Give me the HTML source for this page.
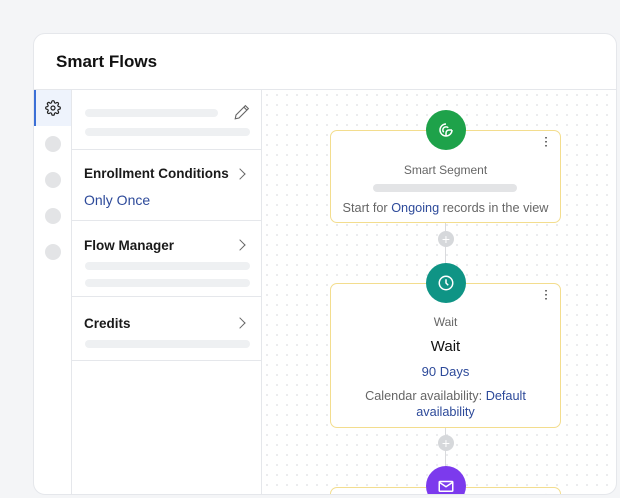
<!DOCTYPE html>
<html><head><style>
*{margin:0;padding:0;box-sizing:border-box}
html,body{width:620px;height:498px;overflow:hidden}
body{background:#f4f5f7;font-family:"Liberation Sans",sans-serif;position:relative}
.card{position:absolute;left:33px;top:33px;width:584px;height:462px;background:#fff;border:1px solid #e5e7eb;border-radius:12px;overflow:hidden}
.hdr{position:absolute;left:0;top:0;right:0;height:56px;border-bottom:1px solid #e5e7eb}
.hdr h1{position:absolute;left:22px;top:18px;font-size:17px;font-weight:bold;color:#111}
.col{position:absolute;left:0;top:56px;width:38px;bottom:0;border-right:1px solid #e5e7eb}
.act{position:absolute;left:0;top:0;width:37px;height:36px;background:#eef3fc;border-left:2px solid #3b6fd6}
.dot{position:absolute;left:11px;width:16px;height:16px;border-radius:50%;background:#e3e4e6}
.panel{position:absolute;left:38px;top:56px;width:190px;bottom:0;border-right:1px solid #e5e7eb}
.sec{position:absolute;left:0;width:189px;border-bottom:1px solid #e5e7eb}
.bar{position:absolute;height:8px;border-radius:4px;background:#eef0f2}
.t{position:absolute;left:12px;font-size:13.5px;font-weight:bold;color:#1a1a1a}
.chev{position:absolute;left:164px;width:8px;height:8px;border-right:1.2px solid #666;border-top:1.2px solid #666;transform:rotate(45deg)}
.canvas{position:absolute;left:228px;top:56px;right:0;bottom:0;background-image:radial-gradient(#e4e5e8 0.8px,transparent 1px);background-size:10px 10px}
.node{position:absolute;left:68px;width:231px;border:1.5px solid #f3dd8e;border-radius:7px;background:#fff;text-align:center;color:#666}
.circ{position:absolute;width:40px;height:40px;border-radius:50%;left:164px;display:flex;align-items:center;justify-content:center}
.line{position:absolute;left:183px;width:1px;background:#d9dadd}
.plus{position:absolute;left:176px;width:16px;height:16px;border-radius:50%;background:#d6d8db;color:#fff;font-size:14px;line-height:16px;text-align:center}
.more{position:absolute;right:12px;top:6px;font-size:10px;color:#333;line-height:4px;font-weight:bold}
.blue{color:#2d4a9a}
</style></head><body>
<div class="card">
 <div class="hdr"><h1>Smart Flows</h1></div>
 <div class="col">
  <div class="act"><svg width="16" height="16" viewBox="0 0 24 24" style="position:absolute;left:9px;top:10px" fill="none" stroke="#222" stroke-width="1.8"><circle cx="12" cy="12" r="3"/><path d="M19.4 15a1.65 1.65 0 0 0 .33 1.82l.06.06a2 2 0 1 1-2.830 2.83l-.06-.06a1.65 1.65 0 0 0-1.820-.33 1.65 1.65 0 0 0-1 1.51V21a2 2 0 1 1-4 0v-.09A1.65 1.65 0 0 0 9 19.4a1.65 1.65 0 0 0-1.82.33l-.06.06a2 2 0 1 1-2.83-2.83l.06-.06A1.65 1.65 0 0 0 4.68 15a1.65 1.65 0 0 0-1.51-1H3a2 2 0 1 1 0-4h.09A1.65 1.65 0 0 0 4.6 9a1.65 1.65 0 0 0-.33-1.82l-.06-.06a2 2 0 1 1 2.83-2.83l.06.06A1.65 1.65 0 0 0 9 4.68a1.65 1.65 0 0 0 1-1.51V3a2 2 0 1 1 4 0v.09a1.65 1.65 0 0 0 1 1.51 1.65 1.65 0 0 0 1.82-.33l.06-.06a2 2 0 1 1 2.83 2.83l-.06.06A1.65 1.65 0 0 0 19.4 9a1.65 1.65 0 0 0 1.51 1H21a2 2 0 1 1 0 4h-.09a1.65 1.65 0 0 0-1.51 1z"/></svg></div>
  <div class="dot" style="top:46px"></div><div class="dot" style="top:82px"></div><div class="dot" style="top:118px"></div><div class="dot" style="top:154px"></div>
 </div>
 <div class="panel">
  <div class="sec" style="top:0;height:60px">
   <div class="bar" style="left:13px;top:19px;width:133px"></div>
   <div class="bar" style="left:13px;top:38px;width:165px"></div>
   <svg width="18" height="18" viewBox="0 0 24 24" style="position:absolute;left:161px;top:13px" fill="none" stroke="#666" stroke-width="1.5"><path d="M16.5 3.5l4 4L8 20l-5 1 1-5z"/><path d="M14.5 5.5l4 4"/></svg>
  </div>
  <div class="sec" style="top:60px;height:71px">
   <div class="t" style="top:16px">Enrollment Conditions</div><div class="chev" style="top:20px"></div>
   <div style="position:absolute;left:12px;top:42px;font-size:14px" class="blue">Only Once</div>
  </div>
  <div class="sec" style="top:131px;height:76px">
   <div class="t" style="top:17px">Flow Manager</div><div class="chev" style="top:20px"></div>
   <div class="bar" style="left:13px;top:41px;width:165px"></div>
   <div class="bar" style="left:13px;top:58px;width:165px"></div>
  </div>
  <div class="sec" style="top:207px;height:64px">
   <div class="t" style="top:19px">Credits</div><div class="chev" style="top:22px"></div>
   <div class="bar" style="left:13px;top:43px;width:165px"></div>
  </div>
 </div>
 <div class="canvas">
  <div class="line" style="top:132px;height:60px"></div>
  <div class="line" style="top:337px;height:60px"></div>
  <div class="node" style="top:40px;height:93px">
   <div class="more">·<br>·<br>·</div>
   <div style="position:absolute;left:0;right:0;top:32px;font-size:12px">Smart Segment</div>
   <div style="position:absolute;left:42px;top:53px;width:144px;height:8px;border-radius:4px;background:#e3e4e6"></div>
   <div style="position:absolute;left:0;right:0;top:70px;font-size:12.7px">Start for <span class="blue">Ongoing</span> records in the view</div>
  </div>
  <div class="circ" style="top:20px;background:#1ea24a"><svg width="18" height="18" viewBox="0 0 24 24" fill="none" stroke="#fff" stroke-width="2"><path d="M20 12a8 8 0 1 1-8-8"/><path d="M12 20v-4a4 4 0 0 1 4-4h4"/><path d="M9 15a4 4 0 1 1 6-6"/></svg></div>
  <div class="plus" style="top:141px">+</div>
  <div class="node" style="top:193px;height:145px">
   <div class="more">·<br>·<br>·</div>
   <div style="position:absolute;left:0;right:0;top:31px;font-size:12px">Wait</div>
   <div style="position:absolute;left:0;right:0;top:54px;font-size:15px;color:#111">Wait</div>
   <div style="position:absolute;left:0;right:0;top:80px;font-size:13px" class="blue">90 Days</div>
   <div style="position:absolute;left:20px;right:20px;top:104px;font-size:12.7px;line-height:16px">Calendar availability: <span class="blue">Default availability</span></div>
  </div>
  <div class="circ" style="top:173px;background:#0f9485"><svg width="18" height="18" viewBox="0 0 24 24" fill="none" stroke="#fff" stroke-width="2"><circle cx="12" cy="12" r="9"/><path d="M12 7v5l3 3"/></svg></div>
  <div class="plus" style="top:345px">+</div>
  <div class="node" style="top:397px;height:60px"><div class="more">·<br>·<br>·</div></div>
  <div class="circ" style="top:376px;background:#7c3aed"><svg width="18" height="18" viewBox="0 0 24 24" fill="none" stroke="#fff" stroke-width="2"><rect x="3" y="6" width="18" height="13" rx="1"/><path d="M3 7l9 6 9-6"/></svg></div>
 </div>
</div>
</body></html>
